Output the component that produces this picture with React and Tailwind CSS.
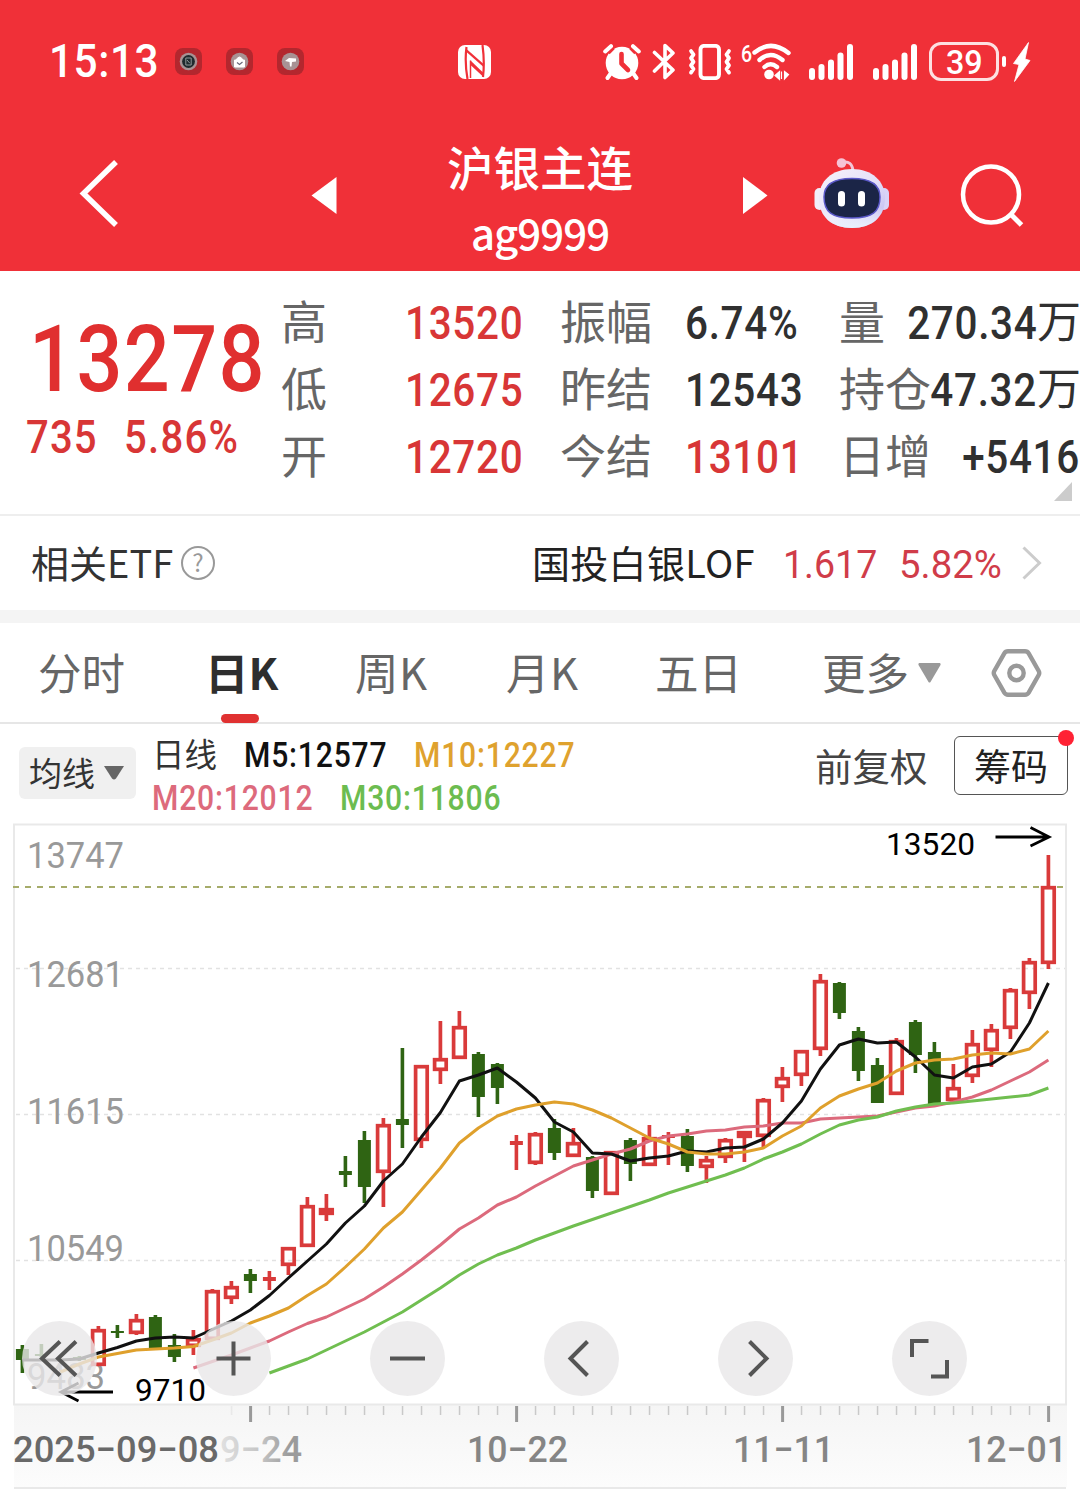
import clsx from 'clsx';

const RED = '#d93a3a';
const GREEN = '#2f6413';

// [type, high, bodyTop, bodyBottom, low]
const CANDLES = [
  ['down', 1345, 1349, 1360, 1373],
  ['down', 1344, 1354, 1356, 1357],
  null,
  ['down', 1356, 1357, 1360, 1361],
  ['up', 1326, 1329, 1366, 1366],
  ['down', 1325, 1331, 1333, 1338],
  ['up', 1314, 1319, 1334, 1335],
  ['down', 1315, 1317, 1348, 1348],
  ['down', 1334, 1345, 1357, 1362],
  ['up', 1330, 1338, 1347, 1355],
  ['up', 1289, 1290, 1340, 1340],
  ['up', 1281, 1286, 1299, 1304],
  ['down', 1269, 1274, 1281, 1293],
  ['doji', 1271, 1277, 1281, 1290],
  ['up', 1247, 1247, 1266, 1275],
  ['up', 1197, 1205, 1247, 1247],
  ['up', 1194, 1208, 1215, 1221],
  ['down', 1156, 1171, 1175, 1187],
  ['down', 1131, 1140, 1187, 1203],
  ['up', 1118, 1124, 1173, 1207],
  ['down', 1048, 1119, 1125, 1148],
  ['up', 1065, 1065, 1141, 1148],
  ['up', 1021, 1058, 1071, 1084],
  ['up', 1011, 1026, 1059, 1059],
  ['down', 1052, 1054, 1097, 1117],
  ['down', 1063, 1064, 1088, 1104],
  ['doji', 1135, 1141, 1145, 1170],
  ['up', 1132, 1133, 1164, 1165],
  ['down', 1119, 1128, 1153, 1160],
  ['up', 1128, 1142, 1157, 1157],
  ['down', 1156, 1157, 1191, 1198],
  ['up', 1151, 1151, 1195, 1195],
  ['down', 1138, 1140, 1164, 1181],
  ['up', 1125, 1137, 1166, 1166],
  ['doji', 1132, 1135, 1138, 1165],
  ['down', 1129, 1136, 1166, 1172],
  ['up', 1156, 1159, 1168, 1183],
  ['up', 1138, 1139, 1158, 1163],
  ['up', 1131, 1131, 1138, 1162],
  ['up', 1098, 1099, 1137, 1147],
  ['up', 1067, 1077, 1088, 1102],
  ['up', 1050, 1050, 1076, 1086],
  ['up', 974, 980, 1050, 1056],
  ['down', 982, 983, 1013, 1019],
  ['down', 1027, 1031, 1071, 1081],
  ['down', 1058, 1065, 1103, 1103],
  ['up', 1038, 1040, 1095, 1095],
  ['down', 1020, 1022, 1055, 1073],
  ['down', 1042, 1052, 1105, 1107],
  ['up', 1064, 1087, 1101, 1101],
  ['up', 1030, 1043, 1077, 1083],
  ['up', 1024, 1029, 1051, 1067],
  ['up', 988, 989, 1029, 1039],
  ['up', 958, 961, 994, 1009],
  ['up', 855, 886, 964, 969],
];

const AVERAGES = [
  {
    id: 'm20',
    color: '#dc6a7c',
    start: 9,
    values: [1368, 1361.5, 1355, 1348, 1341, 1332, 1323.5, 1317, 1308, 1299, 1287, 1274, 1260, 1245, 1229, 1218, 1205, 1197, 1186, 1176, 1166, 1160, 1154, 1149, 1141, 1136, 1134, 1131, 1130, 1127, 1126, 1123, 1123, 1119, 1118, 1117, 1116, 1112, 1108, 1106, 1102, 1097, 1090, 1081, 1072, 1060],
  },
  {
    id: 'm30',
    color: '#70be50',
    start: 13,
    values: [1373, 1366, 1359, 1350, 1341, 1332, 1322, 1312, 1300, 1288, 1275, 1264, 1255, 1248, 1240, 1233, 1226, 1219.5, 1213, 1206.5, 1200, 1193, 1187, 1181, 1175, 1168, 1159, 1152, 1144, 1134, 1125, 1120, 1117, 1111, 1107, 1104, 1103, 1101, 1099, 1097, 1095, 1088],
  },
  {
    id: 'm5',
    color: '#111111',
    start: 0,
    values: [1360, 1360, 1360, 1359, 1353, 1347.5, 1341, 1338, 1337, 1338, 1329.5, 1321, 1310, 1295.5, 1278, 1261, 1244, 1223, 1206, 1181, 1164, 1137, 1112.5, 1081, 1075, 1068, 1082, 1098, 1122, 1132, 1153, 1154, 1161, 1158, 1156, 1151, 1152, 1148, 1147, 1139, 1123, 1101, 1069, 1045, 1039, 1043, 1042, 1057, 1075, 1078, 1067, 1064, 1052, 1023, 983],
  },
  {
    id: 'm10',
    color: '#dfa02c',
    start: 2,
    values: [1372, 1364, 1357, 1353.5, 1350, 1349, 1348, 1346.5, 1340, 1333, 1323, 1316, 1308, 1295.5, 1284, 1267, 1249, 1228, 1212, 1190, 1168, 1143, 1128, 1116, 1109, 1105, 1102, 1104, 1110, 1118, 1128, 1138, 1144, 1152, 1154, 1154, 1152, 1148, 1136, 1126, 1108, 1096, 1089, 1083, 1071, 1063, 1060, 1059, 1055, 1053, 1054, 1049, 1031],
  },
];

const PRICE_LABELS = [
  ['13747', 868, 97],
  ['12681', 987, 97],
  ['11615', 1124, 97],
  ['10549', 1261, 97],
  ['9483', 1389, 78],
];

const TICKS = Array.from({ length: 44 }, (_, i) => i + 11);

const xAt = (i) => 22.4 + i * 19;

function Digits({ className, children }) {
  return (
    <span className={clsx("inline-block whitespace-nowrap font-['Roboto',sans-serif] leading-none", className)}>
      {children}
    </span>
  );
}

function AppBadge({ children }) {
  return (
    <svg className="h-[27px] w-[27px]" viewBox="0 0 27 27">
      <rect width="27" height="27" rx="8" fill="#b3272e" />
      <circle cx="13.5" cy="13.5" r="8.8" fill="#a89294" />
      {children}
    </svg>
  );
}

function Signal() {
  return (
    <svg className="h-[36px] w-[45px]" viewBox="0 0 45 36" fill="#fff">
      <rect x="0" y="24" width="6" height="12" rx="3" />
      <rect x="9.5" y="20" width="6" height="16" rx="3" />
      <rect x="19" y="15.5" width="6" height="20.5" rx="3" />
      <rect x="28.5" y="8.5" width="6" height="27.5" rx="3" />
      <rect x="38" y="0" width="6" height="36" rx="3" />
    </svg>
  );
}

function StatusBar() {
  return (
    <div className="flex h-[123px] items-center pl-[49px]">
      <div className="w-[126px]">
        <Digits className="origin-left scale-x-[0.91] text-[46.5px] font-medium tracking-[0.6px]">15:13</Digits>
      </div>
      <div className="flex gap-6">
        <AppBadge>
          <circle cx="13.5" cy="13.5" r="6.4" fill="#1f2a2d" />
          <path d="M10.8 10h5.4v7h-5.4zM12 12l2.8 3.2" fill="none" stroke="#8d9698" strokeWidth="1" />
        </AppBadge>
        <AppBadge>
          <path d="M8.5 12h10v7h-10zM10 12q3.5-6 7 0" fill="#fff" stroke="#fff" strokeWidth="1" />
          <path d="M11 14.5l2.5 2 3-2.5" fill="none" stroke="#667" strokeWidth="1.2" />
        </AppBadge>
        <AppBadge>
          <path d="M8 13l4-3 7 .5v3l-4 .5-.5 4.5h-1.5l-.5-4.5z" fill="#fff" />
        </AppBadge>
      </div>
      {/* NFC */}
      <svg className="ml-[154px] h-[34px] w-[33px]" viewBox="0 0 33 34">
        <rect width="33" height="34" rx="7" fill="#fff" />
        <path d="M8.5 2Q6.500 17 9.500 34" fill="none" stroke="#f03038" strokeWidth="2.2" />
        <path d="M24.5 0Q26.8 17 25 32" fill="none" stroke="#f03038" strokeWidth="2.2" />
        <path d="M8 3.5L25 18.500V21.500L8.500 7z" fill="#f03038" />
        <path d="M12.500 15.500L25.500 28V32L12.500 20z" fill="#f03038" />
        <path d="M12.500 15.500V33" stroke="#f03038" strokeWidth="1.500" />
      </svg>
      {/* Alarm */}
      <svg className="ml-[112px] h-[36px] w-[38px]" viewBox="0 0 38 36">
        <circle cx="19" cy="19" r="16.3" fill="#fff" />
        <path d="M2.2 7.5L8 2.2M35.8 7.5L30 2.2M8 29L4.5 34M30 29L33.5 34" stroke="#fff" strokeWidth="4" strokeLinecap="round" fill="none" />
        <path d="M6 9.500L11 4.500M32 9.500L27 4.500" stroke="#f03038" strokeWidth="1.800" />
        <path d="M18.5 10V19.5L25 26" stroke="#f03038" strokeWidth="4.6" strokeLinecap="round" strokeLinejoin="round" fill="none" />
      </svg>
      {/* Bluetooth */}
      <svg className="ml-[11px] h-[37px] w-[24px]" viewBox="0 0 24 37">
        <path d="M2.5 9.5L21 27 13 34.5V2.5L21 10 2.5 28" fill="none" stroke="#fff" strokeWidth="3.6" strokeLinecap="round" strokeLinejoin="round" />
      </svg>
      {/* Vibrate */}
      <svg className="ml-[12px] h-[36px] w-[44px]" viewBox="0 0 44 36" fill="none" stroke="#fff">
        <rect x="12.5" y="1.9" width="18.5" height="32.2" rx="3.5" strokeWidth="3.9" />
        <path d="M3 7l2.5 3.6-2.5 3.6 2.5 3.6-2.5 3.6 2.5 3.6-2.5 3.6M41 7l-2.5 3.6 2.5 3.6-2.5 3.6 2.5 3.6-2.5 3.6 2.5 3.6" strokeWidth="3.8" strokeLinecap="round" strokeLinejoin="round" />
      </svg>
      {/* Wi-Fi 6 */}
      <div className="ml-[9px] flex h-[38px] items-start text-white">
        <Digits className="w-[10px] origin-left scale-x-[0.85] text-[23px] leading-[14px] font-medium">6</Digits>
        <svg className="h-[38px] w-[41px]" viewBox="0 0 41 38">
          <g fill="none" stroke="#fff" strokeWidth="4.4" strokeLinecap="round">
            <path d="M3.5 9.5Q20 -4 37.5 10" />
            <path d="M8.5 17Q19.5 7 31.5 17" />
            <path d="M13.5 24Q19.5 18.5 26 24" />
          </g>
          <circle cx="18" cy="31.5" r="4.8" fill="#fff" />
          <path d="M24 32.5l4.5-4v8zM30.5 28.5v7.500M33.5 28.5l4 3-4 4.500z" fill="#fff" stroke="#fff" strokeWidth="1.2" />
        </svg>
      </div>
      <div className="ml-[17px] flex gap-[19px]">
        <Signal />
        <Signal />
      </div>
      <div className="ml-[11px] flex h-[39px] w-[70px] items-center justify-center rounded-[12px] border-[3px] border-white/85">
        <Digits className="scale-x-[0.95] text-[34px] font-medium">39</Digits>
      </div>
      <div className="ml-[3px] h-[11px] w-[4px] rounded-full bg-white" />
      <svg className="ml-[7px] h-[40px] w-[18px]" viewBox="0 0 18 40">
        <path d="M15.5 0.5L0.5 21.500 6 22.500 1.500 39.500 17 18.500 12 17z" fill="#fff" stroke="#fff" strokeWidth="0.800" strokeLinejoin="round" />
      </svg>
    </div>
  );
}

function Robot() {
  return (
    <svg className="h-[72px] w-[76px]" viewBox="0 0 76 72">
      <defs>
        <linearGradient id="head" x1="0" y1="0" x2="1" y2="1">
          <stop offset="0" stopColor="#f7f3fb" />
          <stop offset="0.55" stopColor="#e4dff8" />
          <stop offset="1" stopColor="#b9b4f0" />
        </linearGradient>
        <linearGradient id="chin" x1="0" y1="0" x2="0" y2="1">
          <stop offset="0.65" stopColor="#fff" stopOpacity="0" />
          <stop offset="1" stopColor="#e8f0fc" />
        </linearGradient>
      </defs>
      <path d="M28 5.5Q38 3 39 14" fill="none" stroke="#f3c5d8" strokeWidth="3" />
      <circle cx="27.5" cy="6" r="4.8" fill="#f6c3d6" />
      <rect x="0.5" y="31" width="10" height="22" rx="5" fill="#f1eefa" />
      <rect x="65" y="31" width="10" height="22" rx="5" fill="#d9d3f7" />
      <path d="M38 12C58 12 71 24 71 41C71 60 58 71 38 71C18 71 5 60 5 41C5 24 18 12 38 12z" fill="url(#head)" />
      <path d="M38 12C58 12 71 24 71 41C71 60 58 71 38 71C18 71 5 60 5 41C5 24 18 12 38 12z" fill="url(#chin)" />
      <path d="M38 21.5C58 21.5 66 28 66 40C66 55 58 61 38 61C18 61 10 55 10 40C10 28 18 21.5 38 21.5z" fill="#1b2547" stroke="#5a58c8" strokeWidth="1.5" />
      <rect x="24" y="34" width="7" height="15.5" rx="3.5" fill="#fff" />
      <rect x="44" y="34" width="7" height="15.5" rx="3.5" fill="#fff" />
    </svg>
  );
}

function TitleBar() {
  return (
    <div className="flex h-[148px] items-start pl-[79px]">
      <svg className="mt-[36px] h-[68px] w-[40px]" viewBox="0 0 40 68">
        <path d="M37 3L4.5 34.5 37 66" fill="none" stroke="#fff" strokeWidth="5.5" />
      </svg>
      <svg className="mt-[54px] ml-[192px] h-[38px] w-[26px]" viewBox="0 0 26 38">
        <path d="M25.5 0V37L0.5 18.5z" fill="#fff" />
      </svg>
      <div className="mt-[17px] ml-[110px] flex w-[186px] flex-col items-center font-medium">
        <h1 className="text-[46.5px] leading-[52px] whitespace-nowrap">沪银主连</h1>
        <p className="mt-[14px] text-[42px] leading-[52px] tracking-[-1px]">ag9999</p>
      </div>
      <svg className="mt-[54px] ml-[110px] h-[38px] w-[26px]" viewBox="0 0 26 38">
        <path d="M0 0V37L24.5 18.5z" fill="#fff" />
      </svg>
      <div className="mt-[34px] ml-[45px]">
        <Robot />
      </div>
      <svg className="mt-[41px] ml-[70px] h-[64px] w-[66px]" viewBox="0 0 66 64">
        <circle cx="31" cy="30.5" r="28" fill="none" stroke="#fff" strokeWidth="4.5" />
        <path d="M51 50.5L61.5 61" stroke="#fff" strokeWidth="5" />
      </svg>
    </div>
  );
}

function QuoteLabel({ children }) {
  return <span className="-mt-[5px] text-[46px] leading-none text-[#666]">{children}</span>;
}

function QuoteValue({ red, right, children }) {
  return (
    <Digits
      className={clsx(
        'mt-[2px] scale-x-[0.86] text-[47px] font-medium tracking-[0.8px]',
        red ? 'text-[#d83636]' : 'text-[#303030]',
        right ? 'origin-right' : 'origin-left'
      )}
    >
      {children}
    </Digits>
  );
}

function QuotePanel() {
  const rows = [
    ['高', '13520', '振幅', '6.74%', false, '量', '270.34', '万'],
    ['低', '12675', '昨结', '12543', false, '持仓', '47.32', '万'],
    ['开', '12720', '今结', '13101', true, '日增', '+5416', ''],
  ];
  return (
    <section className="relative flex h-[245px] border-b-2 border-[#eee]">
      <div className="w-[281px] shrink-0 pt-[42px]">
        <Digits className="ml-[29px] origin-left scale-x-[0.87] text-[93px] font-medium tracking-[1.6px] text-[#e02f2f]">13278</Digits>
        <div className="mt-[8px] flex pl-[26px] text-[46px] font-medium text-[#d83636]">
          <Digits className="w-[98px] origin-left scale-x-[0.87] tracking-[1.3px]">735</Digits>
          <Digits className="origin-left scale-x-[0.87] tracking-[1.5px]">5.86%</Digits>
        </div>
      </div>
      <div className="flex flex-1 flex-col pt-[17px]">
        {rows.map(([l1, v1, l2, v2, red, l3, v3, unit]) => (
          <div key={l1} className="grid h-[67px] grid-cols-[124px_155px_125px_154px_242px] items-center whitespace-nowrap">
            <QuoteLabel>{l1}</QuoteLabel>
            <QuoteValue red>{v1}</QuoteValue>
            <QuoteLabel>{l2}</QuoteLabel>
            <QuoteValue red={red}>{v2}</QuoteValue>
            <div className="flex items-center justify-between pr-[1px]">
              <QuoteLabel>{l3}</QuoteLabel>
              <div className="-ml-12 flex items-center">
                <QuoteValue right>{v3}</QuoteValue>
                {unit && <span className="-mt-[6px] -mr-[1px] text-[44px] leading-none text-[#303030]">{unit}</span>}
              </div>
            </div>
          </div>
        ))}
      </div>
      <svg className="absolute right-2 bottom-[13px] h-[19px] w-[18px]" viewBox="0 0 18 19">
        <path d="M18 0V19H0z" fill="#ccc" />
      </svg>
    </section>
  );
}

function EtfRow() {
  return (
    <section className="flex h-[94px] items-center pl-[31px] text-[38px] leading-none whitespace-nowrap text-[#333]">
      <span className="-mt-[2px] w-[150px]">相关ETF</span>
      <span className="flex h-[34px] w-[34px] items-center justify-center rounded-full border-2 border-[#999] pb-0.5 text-[24px] leading-none text-[#999]">?</span>
      <span className="-mt-[2px] ml-[317px] w-[251px] tracking-[0.3px] text-[#222]">国投白银LOF</span>
      <Digits className="mt-[4px] w-[116px] origin-left scale-x-[0.95] text-[39.5px] text-[#d03c49]">1.617</Digits>
      <Digits className="mt-[4px] w-[106px] origin-left scale-x-[0.97] text-[39.5px] text-[#d03c49]">5.82%</Digits>
      <svg className="ml-[17px] h-[34px] w-[20px]" viewBox="0 0 20 34">
        <path d="M1.5 1.5L17.5 17 1.5 32.5" fill="none" stroke="#ccc" strokeWidth="3" />
      </svg>
    </section>
  );
}

function Tabs() {
  return (
    <nav className="flex h-[101px] items-center border-b-2 border-[#e6e6e6] pb-[2px] pl-[38px] text-[43.5px] leading-none whitespace-nowrap text-[#666]">
      <span className="w-[167px]">分时</span>
      <span className="relative w-[150px] font-bold text-[#2e2e2e]">
        日K
        <i className="absolute -bottom-[30px] left-[16px] h-[9px] w-[38px] rounded-full bg-[#e03131]" />
      </span>
      <span className="w-[151px] tracking-[0.5px]">周K</span>
      <span className="w-[149px] tracking-[0.5px]">月K</span>
      <span className="w-[167px]">五日</span>
      <span>更多</span>
      <svg className="mt-[2px] ml-[9px] h-[20px] w-[23px]" viewBox="0 0 23 20">
        <path d="M1 0H22Q23 1 22.5 2L12.5 19Q11.5 20 10.5 19L0.5 2Q0 1 1 0z" fill="#999" />
      </svg>
      <svg className="mt-[2px] ml-[50px] h-[48px] w-[51px]" viewBox="0 0 51 48" fill="none" stroke="#999">
        <path d="M17 2.3H34Q36.5 2.3 37.7 4.3L47.7 22Q48.8 24 47.7 26L37.7 43.7Q36.5 45.7 34 45.7H17Q14.5 45.7 13.3 43.7L3.3 26Q2.2 24 3.3 22L13.3 4.3Q14.5 2.3 17 2.3z" strokeWidth="4.4" />
        <circle cx="25.5" cy="24" r="7.2" strokeWidth="4.4" />
      </svg>
    </nav>
  );
}

function IndicatorBar() {
  return (
    <section className="flex h-[99px] items-start pl-[19px] whitespace-nowrap">
      <button className="mt-[23px] flex h-[52px] w-[117px] items-center rounded-md bg-[#f0f0f0] pb-[1px] pl-[10px] text-[33px] leading-none text-[#333]">
        均线
        <svg className="ml-[9px] h-[14px] w-[20px]" viewBox="0 0 20 14">
          <path d="M0 0H20L12 12.5Q10 14.5 8 12.5z" fill="#666" />
        </svg>
      </button>
      <div className="ml-[16px] w-[663px] pt-[10px] text-[35px] font-medium">
        <div className="flex h-[43px] items-center">
          <span className="-mt-[4px] w-[92px] text-[32.5px] leading-none font-normal text-[#333]">日线</span>
          <Digits className="w-[170px] origin-left scale-x-[0.86] tracking-[0.95px] text-[#111]">M5:12577</Digits>
          <Digits className="origin-left scale-x-[0.86] tracking-[0.95px] text-[#dfa22e]">M10:12227</Digits>
        </div>
        <div className="flex h-[43px] items-center">
          <Digits className="w-[188px] origin-left scale-x-[0.86] tracking-[0.95px] text-[#dd6a7c]">M20:12012</Digits>
          <Digits className="origin-left scale-x-[0.86] tracking-[0.95px] text-[#6cbc50]">M30:11806</Digits>
        </div>
      </div>
      <span className="mt-[22px] w-[139px] text-[37.5px] leading-[38px] text-[#444]">前复权</span>
      <button className="relative mt-[12px] flex h-[59px] w-[114px] items-center justify-center rounded-md border border-[#555] text-[37px] leading-none text-[#222]">
        筹码
        <i className="absolute -top-[7px] -right-[7px] h-4 w-4 rounded-full bg-[#ff2234]" />
      </button>
    </section>
  );
}

function Candle({ x, data }) {
  const [type, high, top, bottom, low] = data;
  if (type !== 'up') {
    return (
      <g fill={type === 'down' ? GREEN : RED}>
        <rect x={x - 1.8} y={high} width="3.6" height={low - high} />
        <rect x={x - 6.5} y={top} width="13" height={bottom - top} />
      </g>
    );
  }
  return (
    <g fill="none" stroke={RED} strokeWidth="3.7">
      <path d={`M${x} ${high}V${top + 1}M${x} ${bottom - 1}V${low}`} />
      <rect x={x - 5.8} y={top + 1.7} width="11.6" height={Math.max(bottom - top - 3.4, 1)} />
    </g>
  );
}

function Chart() {
  return (
    <svg className="block h-[668px] w-[1080px] font-['Roboto',sans-serif]" viewBox="0 823 1080 668">
      <defs>
        <linearGradient id="axisFade" gradientUnits="userSpaceOnUse" x1="218" y1="0" x2="290" y2="0">
          <stop offset="0" stopColor="#e2e2e2" />
          <stop offset="0.6" stopColor="#c4c4c4" />
          <stop offset="1" stopColor="#9b9b9b" />
        </linearGradient>
        <linearGradient id="axisBg" x1="0" y1="0" x2="0" y2="1">
          <stop offset="0" stopColor="#f5f5f5" />
          <stop offset="1" stopColor="#fcfcfc" />
        </linearGradient>
      </defs>
      <rect x="14" y="1405" width="1053" height="82" fill="url(#axisBg)" />
      <rect x="14" y="824.5" width="1052" height="580" fill="none" stroke="#e9e9e9" strokeWidth="2" />
      <path d="M14 1488H1066" stroke="#e9e9e9" strokeWidth="2" />
      <path d="M16 968.5H1065M16 1114.5H1065M16 1260.5H1065" stroke="#e2e2e2" strokeWidth="1.3" strokeDasharray="4 4" />
      <path d="M13 887H1063" stroke="#a6ac6a" strokeWidth="1.8" strokeDasharray="6 6" />

      <g fill="#999" fontSize="36.5">
        {PRICE_LABELS.map(([label, y, width]) => (
          <text key={label} x="27" y={y} textLength={width} lengthAdjust="spacingAndGlyphs">{label}</text>
        ))}
      </g>

      {CANDLES.map((data, i) => data && <Candle key={i} x={xAt(i)} data={data} />)}

      {AVERAGES.map(({ id, color, start, values }) => (
        <polyline
          key={id}
          points={values.map((y, i) => `${xAt(start + i)},${y}`).join(' ')}
          fill="none"
          stroke={color}
          strokeWidth="3"
          strokeLinejoin="round"
        />
      ))}

      <g fill="#000" fontSize="31.5">
        <text x="886" y="855" textLength="89" lengthAdjust="spacingAndGlyphs">13520</text>
        <text x="135" y="1401" textLength="71" lengthAdjust="spacingAndGlyphs">9710</text>
      </g>
      <path d="M995.5 837H1048M1030.5 827.5L1049 837 1030.5 846M113 1392H62M78.5 1383L61 1392 78.5 1401" fill="none" stroke="#000" strokeWidth="2.8" />

      {TICKS.map((i) => {
        const major = (i - 12) % 14 === 0;
        return (
          <rect
            key={i}
            x={xAt(i) - (major ? 1.3 : 0.6)}
            y="1406"
            width={major ? 3 : 1.5}
            height={major ? 16 : 9}
            fill={major ? '#999' : '#c9c9c9'}
            opacity={i === 11 ? 0.3 : 1}
          />
        );
      })}

      <g fill="#858585" fontSize="36.5" fontWeight="500">
        <text x="13" y="1462" fill="#696969" textLength="206" lengthAdjust="spacingAndGlyphs">2025−09−08</text>
        <text x="220" y="1462" fill="url(#axisFade)" textLength="82" lengthAdjust="spacingAndGlyphs">9−24</text>
        <text x="467" y="1462" textLength="101" lengthAdjust="spacingAndGlyphs">10−22</text>
        <text x="733" y="1462" textLength="101" lengthAdjust="spacingAndGlyphs">11−11</text>
        <text x="966" y="1462" textLength="101" lengthAdjust="spacingAndGlyphs">12−01</text>
      </g>
    </svg>
  );
}

const CONTROLS = [
  { id: 'first', d: 'M38 20.5L20 37.5 38 54.5M54 20.5L36 37.5 54 54.5' },
  { id: 'zoom-in', d: 'M20.5 37.5H54.5M37.5 20.5V54.5' },
  { id: 'zoom-out', d: 'M20 37.5H55' },
  { id: 'prev', d: 'M43.5 20.5L26.5 37.5 43.5 54.5' },
  { id: 'next', d: 'M31.5 20.5L48.5 37.5 31.5 54.5' },
  { id: 'expand', d: 'M20 36V20H36.5M55 39V55.5H39' },
];

function ChartControls() {
  return (
    <div className="absolute top-[498px] left-[22px] flex gap-[99px]">
      {CONTROLS.map(({ id, d }) => (
        <button key={id} className="h-[75px] w-[75px] rounded-full bg-[#e8e7e8]/80">
          <svg className="h-full w-full" viewBox="0 0 75 75">
            <path d={d} fill="none" stroke="#555" strokeWidth="4" />
          </svg>
        </button>
      ))}
    </div>
  );
}

export default function App() {
  return (
    <main className="h-[1491px] w-[1080px] overflow-hidden bg-white font-['Noto_Sans_CJK_SC',sans-serif]">
      <header className="h-[271px] bg-[#f03038] text-white">
        <StatusBar />
        <TitleBar />
      </header>
      <QuotePanel />
      <EtfRow />
      <div className="h-[13px] bg-[#f4f4f4]" />
      <Tabs />
      <IndicatorBar />
      <div className="relative">
        <Chart />
        <ChartControls />
      </div>
    </main>
  );
}
